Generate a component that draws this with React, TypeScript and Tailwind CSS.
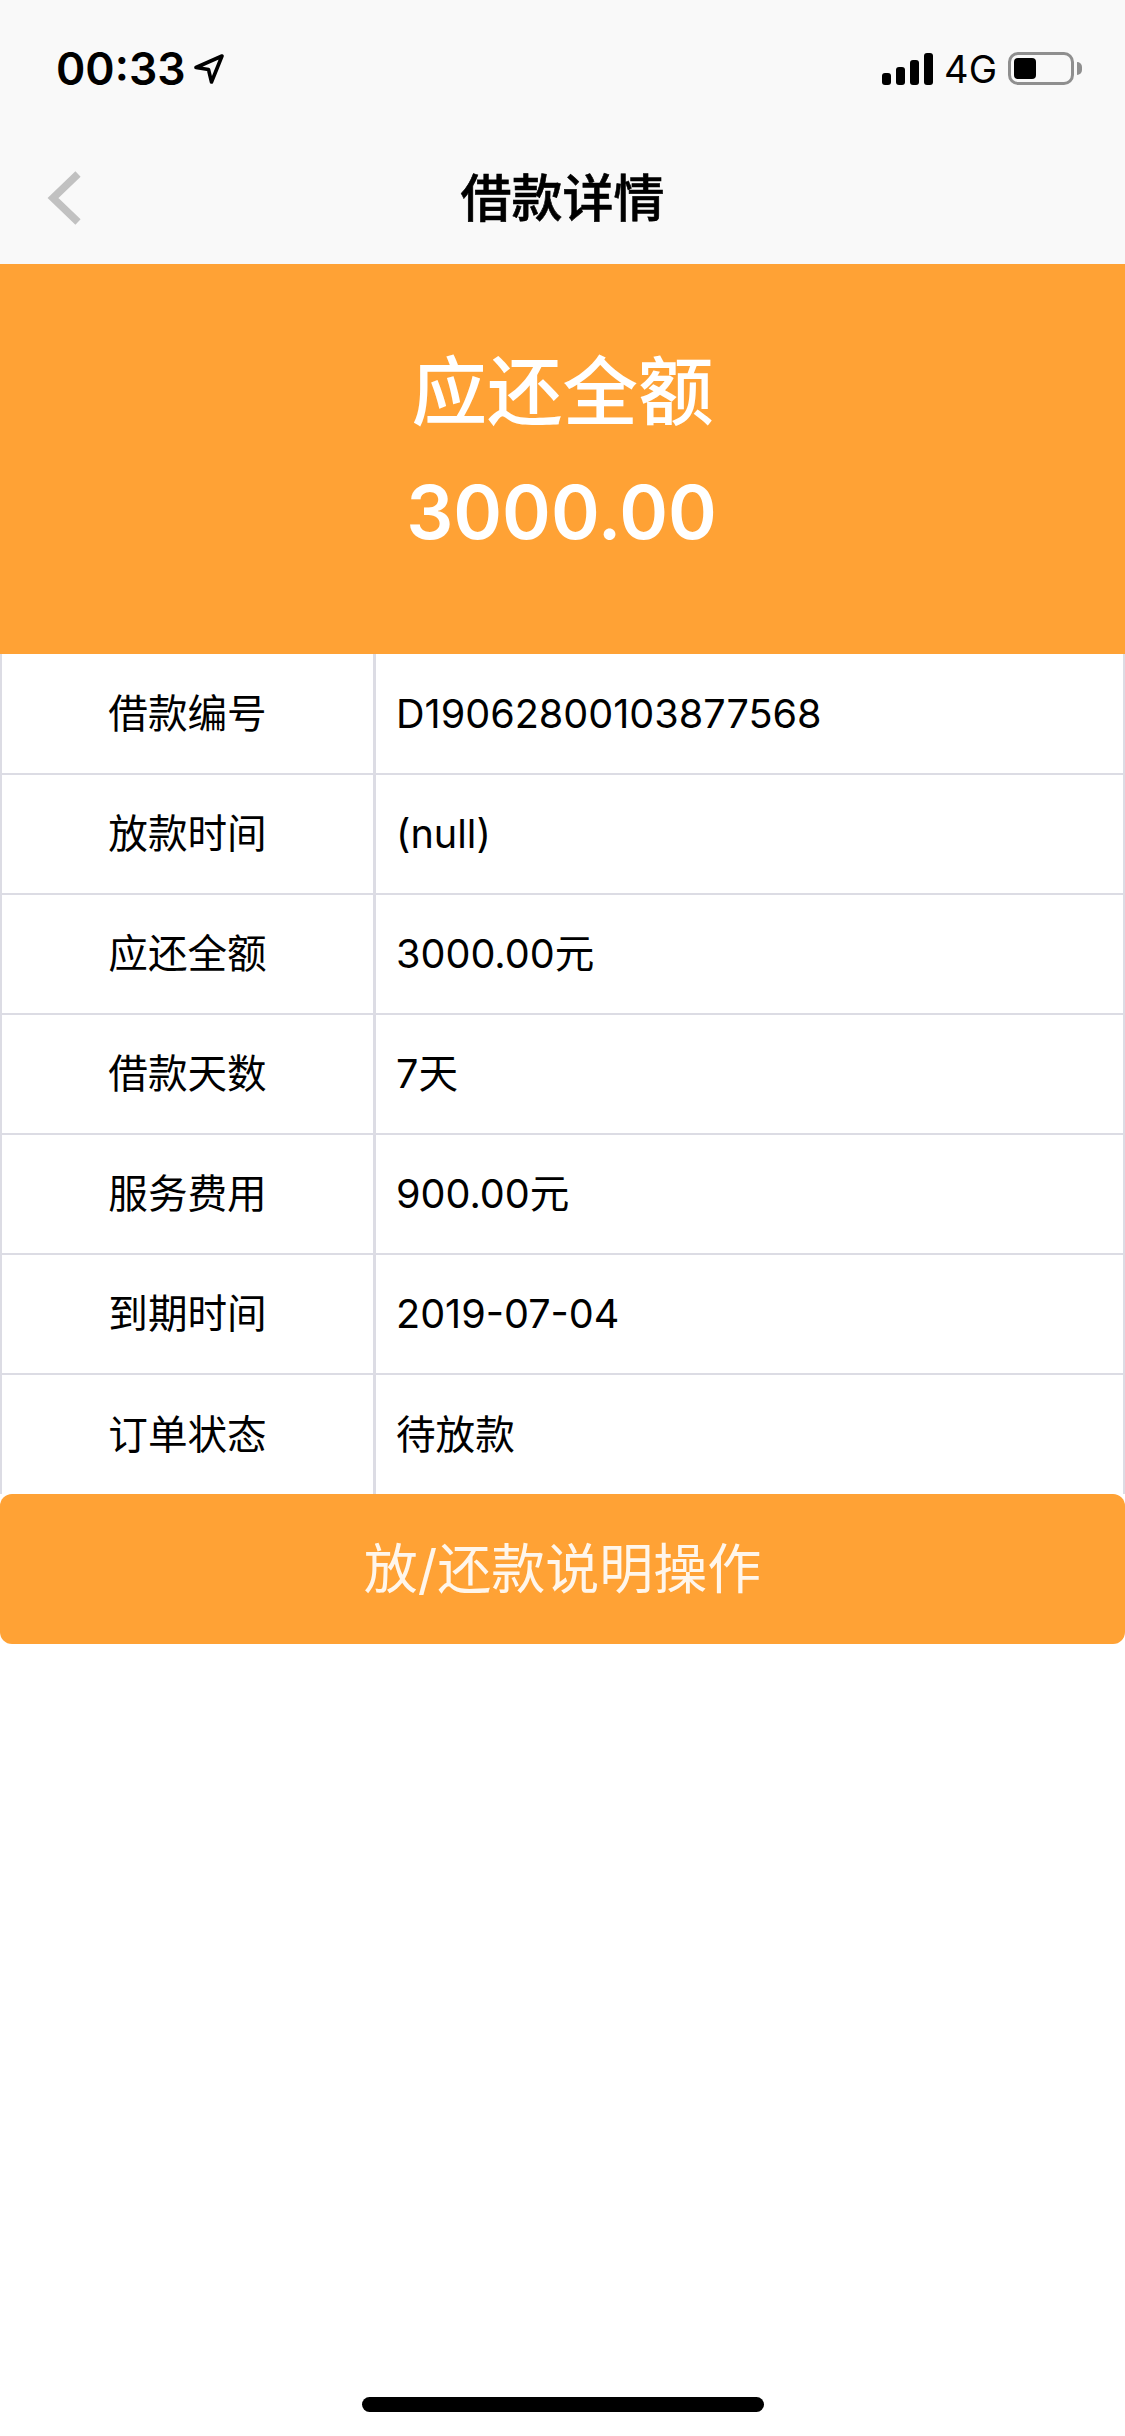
import React from 'react';

const ROWS = [
  { label: '借款编号', value: 'D19062800103877568' },
  { label: '放款时间', value: '(null)' },
  { label: '应还全额', value: '3000.00元' },
  { label: '借款天数', value: '7天' },
  { label: '服务费用', value: '900.00元' },
  { label: '到期时间', value: '2019-07-04' },
  { label: '订单状态', value: '待放款' },
];

const StatusBar = () => (
  <div className="flex h-[132px] items-start justify-between pl-[56px] pr-[43px] pt-[52px]">
    <div className="flex items-center gap-[8px]">
      <span className="text-[44.5px] font-semibold leading-[34px] text-black">00:33</span>
      <svg width="30" height="30" viewBox="0 0 30 30" fill="none">
        <path d="M2 13.5 L28 2 L17.5 28 L14.5 15.5 Z" stroke="#000" strokeWidth="3.6" strokeLinejoin="round" />
      </svg>
    </div>
    <div className="flex items-center">
      <svg width="51" height="32" viewBox="0 0 51 32" fill="#000">
        <rect x="0" y="20" width="9" height="12" rx="3" />
        <rect x="14" y="14" width="9" height="18" rx="3" />
        <rect x="28" y="7" width="9" height="25" rx="3" />
        <rect x="42" y="0" width="9" height="32" rx="3" />
      </svg>
      <span className="ml-[11px] text-[38px] leading-[32px] text-black">4G</span>
      <div className="ml-[11px] h-[33px] w-[66px] rounded-[10px] border-[3px] border-[#8f8f8f] p-[3px]">
        <div className="h-full w-[22px] rounded-[4px] bg-black" />
      </div>
      <div className="ml-[3px] h-[13px] w-[5px] rounded-r-full bg-[#8f8f8f]" />
    </div>
  </div>
);

const NavBar = () => (
  <div className="relative flex h-[132px] items-center justify-center pt-[1px]">
    <button className="absolute left-[46px] top-[39px]">
      <svg width="36" height="54" viewBox="0 0 36 54" fill="none">
        <path d="M32 3 L7 27 L32 51" stroke="#c1c1c1" strokeWidth="7.5" />
      </svg>
    </button>
    <h1 className="text-[51px] font-medium leading-none text-black [-webkit-text-stroke:0.6px_black]">借款详情</h1>
  </div>
);

export default function App() {
  return (
    <div
      className="relative h-[2436px] w-[1125px] overflow-hidden bg-white"
      style={{ fontFamily: 'Inter, "Noto Sans CJK SC", sans-serif' }}
    >
      <header className="bg-[#f9f9f9]">
        <StatusBar />
        <NavBar />
      </header>

      {/* Amount banner */}
      <section className="flex h-[390px] flex-col items-center bg-[#ffa235] pt-[68px] text-white">
        <div className="text-[75.5px] font-medium leading-[120px]">应还全额</div>
        <div className="pr-[2px] text-[74px] font-semibold leading-[120px]">3000.00</div>
      </section>

      {/* Detail table */}
      <div className="border-x-2 border-[#dcdce4]">
        {ROWS.map(row => (
          <div key={row.label} className="flex h-[120px] border-b-[2.5px] border-[#dcdce4] pt-[3px] first:h-[120.5px] last:h-[119.5px] last:border-b-0">
            <div className="flex w-[371px] items-center justify-center text-[39.6px] text-black">{row.label}</div>
            <div className="-mt-[3px] flex flex-1 items-center border-l-[3px] border-[#dcdce4] pl-[20px] pt-[3px] text-[39.6px] text-black">
              {row.value}
            </div>
          </div>
        ))}
      </div>

      <button className="flex h-[150px] w-full items-center justify-center rounded-[12px] bg-[#ffa235] text-[54px] font-normal text-white/90">
        放/还款说明操作
      </button>

      <div className="absolute left-[362px] top-[2397px] h-[15px] w-[402px] rounded-full bg-black" />
    </div>
  );
}
